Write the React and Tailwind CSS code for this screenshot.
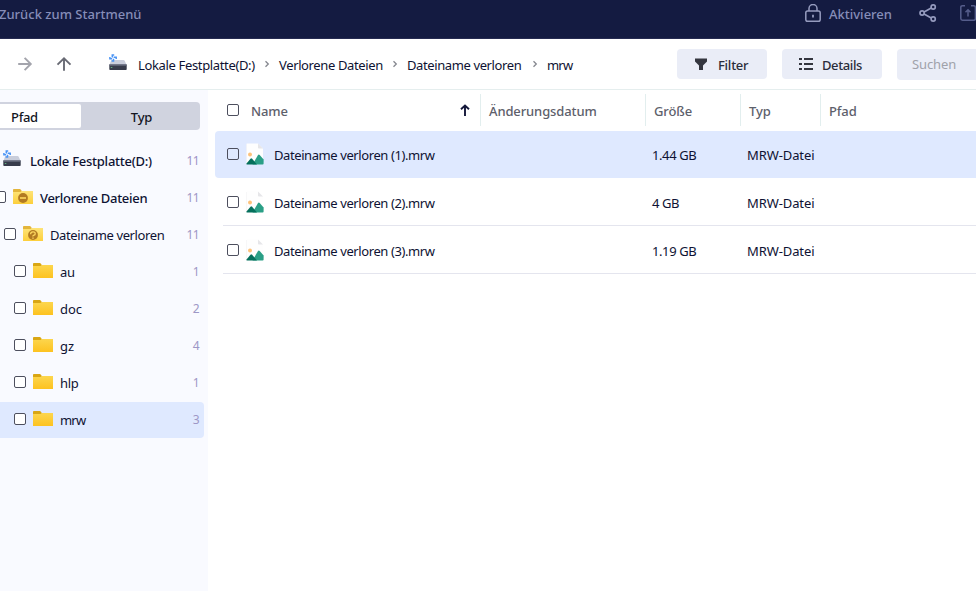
const Drive = ({ className }) => (
  <svg className={className} width="18" height="17" viewBox="0 0 18 17">
    <path d="M3 6h11.500q.8 0 1.200.8L17.600 11H.4L2 6.800Q2.300 6 3 6z" fill="#c9cddb" />
    <path d="M.3 10.500h17.400v4.700q0 .8-.8.8H1.100q-.8 0-.8-.8z" fill="#373b4b" />
    <rect x=".3" y="10.500" width="17.400" height="1.200" fill="#6a6f81" />
    <rect x="1.800" y="13" width="1.500" height="1" fill="#5fae7d" />
    <g fill="none" stroke="#4a94f5" strokeWidth="1.500">
      <path d="M3.300 3.400V.900h1.900M4.700 3.200h2.500v1.900M4.500 4.800v2.300H2.600M3.100 4.700H.9V2.900" />
    </g>
  </svg>
);

const Folder = ({ kind }) => (
  <svg className="shrink-0" width="20" height="15" viewBox="0 0 20 15">
    <defs>
      <linearGradient id="folderFill" x1="0" y1="0" x2="0" y2="1">
        <stop offset="0" stopColor="#fcd64e" />
        <stop offset="1" stopColor="#fdc220" />
      </linearGradient>
      <linearGradient id="folderPale" x1="0" y1="0" x2="0" y2="1">
        <stop offset="0" stopColor="#fde378" />
        <stop offset="1" stopColor="#fdcf3c" />
      </linearGradient>
    </defs>
    <path d="M0 .8Q0 0 .8 0H7.200l1.600 2v3H0z" fill={kind ? "#e3b53c" : "#d9a614"} />
    <path d="M0 3h7.500l1.500-1H20v13H0z" fill={kind ? "url(#folderPale)" : "url(#folderFill)"} />
    {kind && <circle cx="10" cy="9" r="4.900" fill="#b27a22" />}
    {kind === "minus" && <rect x="7" y="8.200" width="6" height="1.600" fill="#fdd860" />}
    {kind === "question" && (
      <path d="M7.600 8.200q0-2.200 2.300-2.300t2.300 1.800q0 1.200-1.200 1.500t-1.200 1.300M9.300 12.200h1.400" fill="none" stroke="#fdd860" strokeWidth="1.300" />
    )}
  </svg>
);

const Picture = () => (
  <svg className="ml-[7px] shrink-0" width="18" height="22" viewBox="0 0 18 22">
    <path d="M.5 1Q.5.500 1 .5h11l5 5V21H.5z" fill="#fefefe" />
    <path d="M.5 1v20" stroke="#f1f1f3" strokeWidth=".6" />
    <path d="M12 .5l5 5h-4.200q-.8 0-.8-.8z" fill="#e6e6e9" />
    <circle cx="4" cy="11.500" r="2" fill="#fdc27b" />
    <path d="M6.500 21.500l5.500-9.600q.8-1 1.700 0L17.600 16.500v4q0 1-1 1z" fill="#2a9f86" />
    <path d="M.3 20.800l4.200-5q.8-.9 1.600 0L11 21.500H.7z" fill="#05705c" />
  </svg>
);

const Check = () => <span className="size-3 shrink-0 rounded-[2px] border border-[#4d4f5e] bg-white" />;
const ClearCheck = () => <span className="size-3 shrink-0 rounded-[2px] border border-[#4d4f5e]" />;

const Chevron = () => (
  <svg className="mx-[9px] mb-[3px] shrink-0" width="6" height="8" viewBox="0 0 6 8">
    <path d="M1.500 1.200L4.300 4 1.500 6.800" fill="none" stroke="#85878f" strokeWidth="1.300" />
  </svg>
);

const tree = [
  { name: "Verlorene Dateien", count: 11, kind: "minus", row: "-ml-[6px]", text: "font-medium tracking-[-0.3px]" },
  { name: "Dateiname verloren", count: 11, kind: "question", row: "ml-1", text: "tracking-[-0.39px]" },
  { name: "au", count: 1, row: "ml-[14px]", text: "tracking-[-0.2px]" },
  { name: "doc", count: 2, row: "ml-[14px]", text: "" },
  { name: "gz", count: 4, row: "ml-[14px]", text: "" },
  { name: "hlp", count: 1, row: "ml-[14px]", text: "tracking-[-0.3px]" },
  { name: "mrw", count: 3, row: "ml-[14px]", text: "tracking-[-0.8px]", active: true },
];

const files = [
  { name: "Dateiname verloren (1).mrw", size: "1.44 GB" },
  { name: "Dateiname verloren (2).mrw", size: "4 GB" },
  { name: "Dateiname verloren (3).mrw", size: "1.19 GB" },
];

export default function App() {
  return (
    <div className="flex h-[591px] w-[976px] flex-col overflow-hidden whitespace-nowrap bg-white font-['Noto_Sans',sans-serif] text-[13px] leading-[18px] text-[#0e1233]">
      <header className="flex h-[39px] shrink-0 items-start border-b border-[#262b51] bg-[#141b41] font-medium text-[#868db8]">
        <span className="-ml-px mt-[5px]">Zurück zum Startmenü</span>
        <svg className="ml-auto mt-1" width="16" height="18" viewBox="0 0 16 18" fill="none" stroke="#959bbe" strokeWidth="1.500">
          <rect x=".8" y="7" width="14.400" height="10.200" rx="1.800" />
          <path d="M4 7V4.500a4 4 0 0 1 8 0V7" />
          <path d="M8 10.700v2.800" strokeWidth="1.800" />
        </svg>
        <span className="ml-2 mt-[5px] w-[90px]">Aktivieren</span>
        <svg className="mt-1" width="18" height="18" viewBox="0 0 18 18" fill="none" stroke="#959bbe" strokeWidth="1.700">
          <circle cx="3.100" cy="9" r="2.100" />
          <circle cx="14.200" cy="3" r="2.100" />
          <circle cx="14.200" cy="15" r="2.100" />
          <path d="M5.100 8l7.100-3.900M5.100 10l7.100 3.900" />
        </svg>
        <svg className="ml-[23px] mt-1" width="16" height="18" viewBox="0 0 16 18" fill="none" stroke="#555d8b" strokeWidth="1.500">
          <path d="M5 1.700H2.500Q.8 1.700.8 3.400v11.200q0 1.700 1.700 1.700h11.200q1.700 0 1.700-1.700V3.400q0-1.700-1.700-1.700H11M8 12.500V6M5.500 8.300L8 5.800l2.500 2.500" />
        </svg>
      </header>

      <div className="flex h-[51px] shrink-0 items-center border-b border-[#e5eeee]">
        <svg className="ml-[17px]" width="16" height="16" viewBox="0 0 16 16" fill="none" stroke="#a3a4ac" strokeWidth="1.900">
          <path d="M1.200 8H13.500M7.600 1.800L13.800 8l-6.200 6.200" />
        </svg>
        <svg className="ml-[23px]" width="16" height="16" viewBox="0 0 16 16" fill="none" stroke="#686a74" strokeWidth="1.900">
          <path d="M8 14.800V2.500M1.500 8.600L8 2.300l6.500 6.300" />
        </svg>
        <Drive className="mb-1 ml-[37px]" />
        <nav className="ml-[11px] mt-[2px] flex items-center">
          <span className="w-[117px] tracking-[-0.35px]">Lokale Festplatte(D:)</span>
          <Chevron />
          <span className="w-[104px] tracking-[-0.37px]">Verlorene Dateien</span>
          <Chevron />
          <span className="w-[116px] tracking-[-0.39px]">Dateiname verloren</span>
          <Chevron />
          <span className="tracking-[-0.8px]">mrw</span>
        </nav>
        <div className="ml-auto flex items-center font-medium text-[#2b2d3b]">
          <button className="flex h-[30px] w-[90px] items-center rounded bg-[#eaedf7] pl-[18px]">
            <svg width="12" height="13" viewBox="0 0 12 13" fill="#34363f">
              <path d="M0 .500h12v3L8 7.500V12H4V7.500L0 3.500z" />
            </svg>
            <span className="ml-[11px] mt-[2px] tracking-[-0.25px]">Filter</span>
          </button>
          <button className="ml-[15px] flex h-[30px] w-[100px] items-center rounded bg-[#eaedf7] pl-[17px]">
            <svg width="14" height="12" viewBox="0 0 14 12" fill="#34363f">
              <path d="M0 0h3v2H0zM5 0h9v2H5zM0 5h3v2H0zM5 5h9v2H5zM0 10h3v2H0zM5 10h9v2H5z" />
            </svg>
            <span className="ml-[9px] mt-[2px] tracking-[-0.4px]">Details</span>
          </button>
          <div className="ml-[15px] flex h-[31px] w-[79px] items-center rounded-l bg-[#eaedf7] pl-[15px] font-normal tracking-[-0.1px] text-[#a0a2aa]">Suchen</div>
        </div>
      </div>

      <div className="flex min-h-0 flex-1">
        <aside className="w-52 shrink-0 overflow-hidden bg-[#f9faff] pt-3">
          <div className="flex h-7 w-[200px] items-center rounded-r bg-[#d0d3df] py-[2px] font-medium text-[#14161f]">
            <div className="flex h-6 w-[81px] items-center rounded-r-[2px] bg-white pl-[11px] pt-[2px] tracking-[-0.3px]">Pfad</div>
            <div className="flex-1 pl-[2px] pt-[2px] text-center tracking-[-0.2px]">Typ</div>
          </div>
          <div className="mt-[13px] flex flex-col gap-px">
            <div className="flex h-9 w-[204px] items-center pr-[5px]">
              <Drive className="mb-[5px] ml-[3px] shrink-0" />
              <span className="ml-[9px] font-medium tracking-[-0.25px]">Lokale Festplatte(D:)</span>
              <span className="ml-auto text-xs tracking-[-0.6px] text-[#9d93c8]">11</span>
            </div>
            {tree.map((t) => (
              <div key={t.name} className={`flex h-9 w-[204px] items-center rounded-r-[4px] pr-[5px] ${t.active ? "bg-[#dfe9ff]" : ""}`}>
                <div className={`flex items-center ${t.row}`}>
                  <span className="mb-[2px] flex items-center gap-[7px]">
                    <Check />
                    <span className="mb-px">
                      <Folder kind={t.kind} />
                    </span>
                  </span>
                  <span className={`ml-[7px] ${t.text}`}>{t.name}</span>
                </div>
                <span className="ml-auto text-xs tracking-[-0.6px] text-[#9d97c6]">{t.count}</span>
              </div>
            ))}
          </div>
        </aside>

        <main className="min-w-0 flex-1 pl-[7px]">
          <div className="flex h-[41px] items-start pl-3 pt-1 font-medium tracking-[-0.12px] text-[#5d606b]">
            <div className="flex h-8 w-[254px] items-center border-r border-[#e2eeee]">
              <ClearCheck />
              <span className="ml-3 mt-[2px]">Name</span>
              <svg className="ml-auto mr-[10px]" width="10" height="12" viewBox="0 0 10 12" fill="none" stroke="#14183a" strokeWidth="1.900">
                <path d="M5 12V1.800M1 5.300l4-3.700 4 3.700" />
              </svg>
            </div>
            <div className="flex h-8 w-[165px] items-center border-r border-[#e2eeee] pl-2 pt-[2px]">Änderungsdatum</div>
            <div className="flex h-8 w-[95px] items-center border-r border-[#e2eeee] pl-2 pt-[2px]">Größe</div>
            <div className="flex h-8 w-20 items-center border-r border-[#e2eeee] pl-2 pt-[2px]">Typ</div>
            <div className="flex h-8 items-center pl-2 pt-[2px]">Pfad</div>
          </div>
          {files.map((f, i) => (
            <div
              key={f.name}
              className={`flex items-center ${i === 0 ? "h-[47px] rounded-l-[4px] bg-[#dfe9ff] pb-px pl-3" : "ml-2 h-12 border-b border-[#e4e5ee] pl-1"}`}
            >
              <ClearCheck />
              <Picture />
              <div className="mt-[2px] flex">
                <span className="ml-[10px] w-[378px] tracking-[-0.41px]">{f.name}</span>
                <span className="w-[95px] tracking-[-0.4px]">{f.size}</span>
                <span className="tracking-[-0.1px]">MRW-Datei</span>
              </div>
            </div>
          ))}
        </main>
      </div>
    </div>
  );
}
